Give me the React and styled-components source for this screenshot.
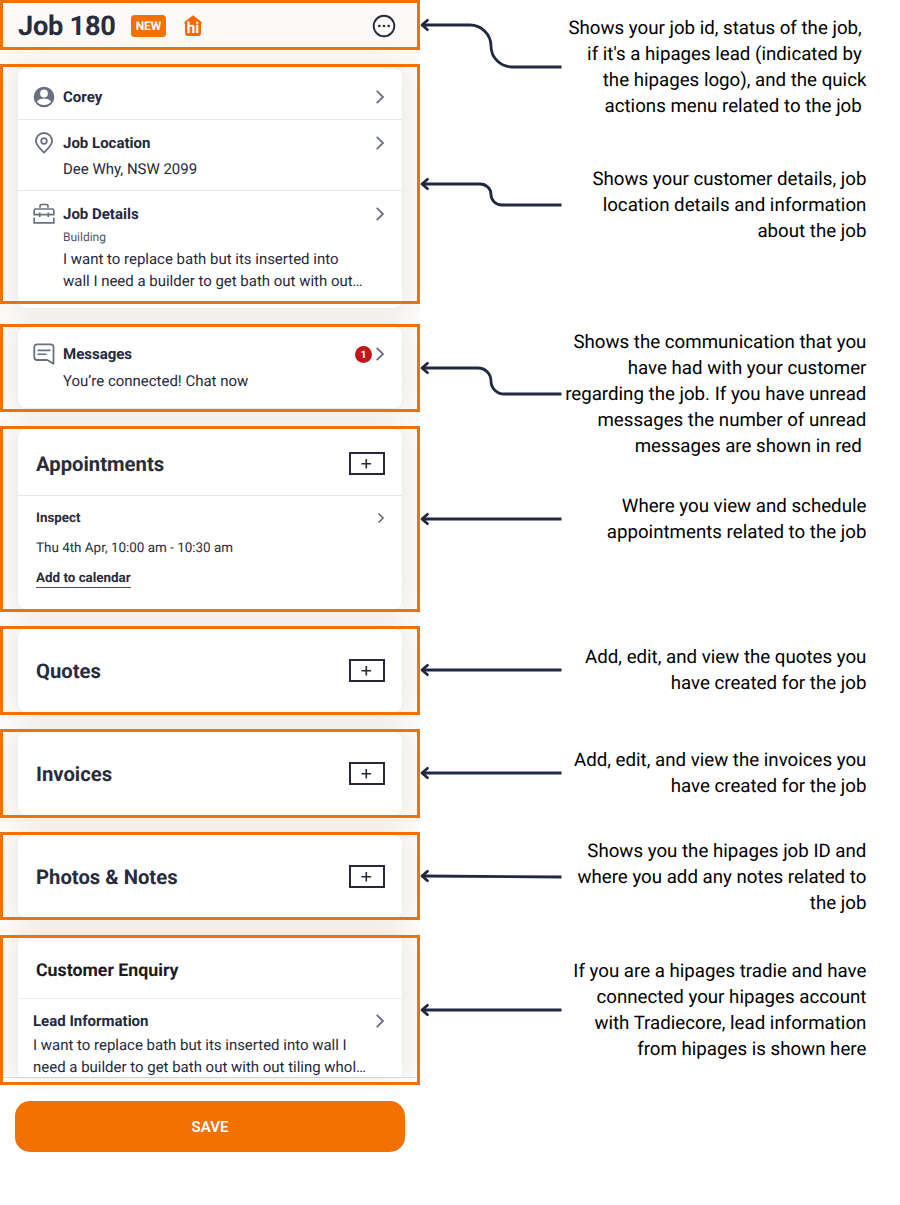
import React from "react";
import styled, { createGlobalStyle } from "styled-components";

const GlobalStyle = createGlobalStyle`
  * { box-sizing: border-box; }
  body {
    margin: 0;
    background: #fff;
    font-family: Roboto, "Liberation Sans", sans-serif;
    text-rendering: geometricPrecision;
    color: #1f2940;
  }
`;

const Page = styled.main`
  display: flex;
  width: 900px;
  height: 1205px;
  overflow: hidden;
`;

const Phone = styled.div`
  width: 420px;
  flex: none;
`;

const Screen = styled.div`
  background: #fbfaf8;
  height: 1078px;
  border-bottom: 1px solid #dfdfe2;
`;

const Section = styled.section`
  position: relative;
  height: ${(p) => p.$h}px;
  margin-bottom: ${(p) => p.$gap}px;
  padding: ${(p) => p.$top}px 18px 0;
`;

/* Callout frame laid over a section of the screen */
const Frame = styled.div`
  position: absolute;
  inset: 0;
  z-index: 2;
  border: 3px solid #f27100;
  pointer-events: none;
`;

const Header = styled.header`
  display: flex;
  align-items: center;
  height: 50px;
  padding: 2px 6px 0 0;
`;

const JobTitle = styled.h1`
  margin: 0 15px 0 0;
  width: 98px;
  white-space: nowrap;
  font-size: 27.2px;
  line-height: 32px;
  font-weight: 700;
  letter-spacing: -0.25px;
  color: #292c3d;
`;

const Tag = styled.span`
  width: 35px;
  height: 22px;
  margin-right: 17px;
  border-radius: 3.5px;
  background: #f27100;
  color: #fff;
  font-size: 12px;
  font-weight: 700;
  line-height: 22px;
  text-align: center;
`;

const MenuButton = styled.span`
  display: flex;
  margin-left: auto;
`;

const Card = styled.article`
  height: ${(p) => p.$h}px;
  border-radius: ${(p) => (p.$cut ? "8px 8px 0 0" : "8px")};
  background: #fff;
  box-shadow: 0 0 28px rgba(30, 28, 24, 0.09), 0 0 3px rgba(30, 28, 24, 0.05);
`;

const Item = styled.div`
  height: ${(p) => p.$h}px;
  padding: ${(p) => p.$pt}px 17px 0 15px;
  border-bottom: ${(p) => (p.$last ? "0" : "1px solid #e8e8ea")};
`;

const ItemHead = styled.div`
  display: flex;
  align-items: center;
  height: 22px;
`;

const IconSlot = styled.span`
  display: flex;
  width: 30px;
`;

const Label = styled.span`
  font-size: ${(p) => p.$size || 15}px;
  font-weight: 700;
  white-space: nowrap;
  color: ${(p) => p.$color || "#1f2940"};
`;

const End = styled.span`
  display: flex;
  align-items: center;
  gap: 2px;
  margin-left: auto;
`;

const Count = styled.span`
  width: 17px;
  height: 17px;
  border-radius: 50%;
  background: #c41616;
  color: #fff;
  font-size: 10.5px;
  font-weight: 700;
  line-height: 17px;
  text-align: center;
`;

const Category = styled.div`
  padding: 4px 0 0 30px;
  font-size: 12px;
  line-height: 16px;
  color: #4d556a;
`;

const Body = styled.div`
  padding: ${(p) => p.$pt}px 0 0 ${(p) => p.$indent}px;
  font-size: 14.97px;
  line-height: 21.5px;
  white-space: nowrap;
`;

const CardHead = styled.div`
  display: flex;
  align-items: center;
  justify-content: space-between;
  height: ${(p) => p.$h}px;
  padding: ${(p) => p.$pt || 0}px 17px 0 18px;
  border-bottom: ${(p) => (p.$line ? `1px solid ${p.$line}` : "0")};
`;

const CardTitle = styled.h2`
  margin: 0;
  font-size: ${(p) => p.$size || 20.25}px;
  line-height: 26px;
  font-weight: 700;
  color: ${(p) => p.$color || "#292c3d"};
`;

const AddBox = styled.span`
  display: flex;
  align-items: center;
  justify-content: center;
  width: 36px;
  height: 23px;
  border: 2px solid #25293a;
`;

const Visit = styled.div`
  display: flex;
  flex-direction: column;
  align-items: flex-start;
  padding: 11px 17px 0 18px;
`;

const VisitHead = styled.div`
  display: flex;
  align-items: center;
  width: 100%;
  height: 22px;
`;

const VisitTime = styled.div`
  margin-top: 11px;
  font-size: 13.45px;
  line-height: 18px;
  color: #292c3d;
`;

const CalendarLink = styled.a`
  margin-top: 13px;
  font-size: 13.4px;
  line-height: 16px;
  font-weight: 700;
  color: #292c3d;
  border-bottom: 1px solid #4b4e5e;
`;

const SaveButton = styled.button`
  display: block;
  width: 390px;
  height: 51px;
  margin: 23px 0 0 15px;
  border: 0;
  border-radius: 15px;
  background: #f27100;
  color: #fff;
  font: 600 15px Roboto, sans-serif;
`;

const Connectors = styled.div`
  display: flex;
  flex-direction: column;
  flex: none;
  width: 142px;
`;

const Line = styled.svg`
  display: block;
  flex: none;
  margin-top: ${(p) => p.$mt}px;
  fill: none;
  stroke: #1f2940;
  stroke-width: 2.8;
  stroke-linejoin: round;
`;

const Notes = styled.div`
  display: flex;
  flex-direction: column;
  width: 304.4px;
  padding-top: 15px;
`;

const Note = styled.p`
  margin: 0 0 ${(p) => p.$gap}px;
  font-size: 18.7px;
  line-height: 26px;
  text-align: right;
  white-space: pre;
  color: #000;
`;

const Chevron = ({ small }) => (
  <svg width="11" height="16" viewBox="0 0 11 16" fill="none" stroke={small ? "#50525f" : "#6b7080"} strokeWidth={small ? 1.2 : 1.8}>
    <path d={small ? "M4.5 3.5 9.2 8 4.5 12.5" : "M2.7 1.8 9 8 2.7 14.2"} />
  </svg>
);

const PersonIcon = () => (
  <svg width="22" height="22" viewBox="0 0 22 22">
    <circle cx="11" cy="11" r="10.3" fill="#6b7080" />
    <circle cx="11" cy="7.5" r="3.9" fill="#fff" />
    <path d="M3.9 15.7C5.5 13.4 8 12.6 11 12.6s5.5.8 7.1 3.1C16.6 17.7 14 19 11 19s-5.6-1.3-7.1-3.3Z" fill="#fff" />
  </svg>
);

const PinIcon = () => (
  <svg width="22" height="22" viewBox="0 0 22 22" fill="none" stroke="#6b7080" strokeWidth="1.8">
    <path d="M11 20.6C8.5 17.8 2.9 13.6 2.9 9.1a8.1 8.1 0 0 1 16.2 0C19.1 13.6 13.5 17.8 11 20.6Z" strokeLinejoin="round" />
    <circle cx="11" cy="9" r="2.8" />
  </svg>
);

const ToolboxIcon = () => (
  <svg width="22" height="22" viewBox="0 0 22 22" fill="none" stroke="#6b7080" strokeWidth="1.7">
    <path d="M7 4.8V3.2c0-1 .7-1.7 1.7-1.7h4.6c1 0 1.7.7 1.7 1.7v1.6M1.2 12.500V7.5c0-1 .6-1.5 1.5-1.5h16.6c.9 0 1.5.5 1.5 1.5v5M1.2 14.8v5h19.6v-5M1.2 11.7h19.600M6.700 9.500v4.500M15.300 9.500v4.500" />
  </svg>
);

const ChatIcon = () => (
  <svg width="22" height="22" viewBox="0 0 22 22" fill="none" stroke="#6b7080" strokeWidth="1.8" strokeLinejoin="round">
    <path d="M20.5 20.8V4c0-1.7-1-2.7-2.7-2.7H4C2.3 1.3 1.3 2.3 1.3 4v10.3c0 1.7 1 2.7 2.7 2.7h10.3l6.2 3.8Z" />
    <path d="M5 7.4h12M5 11.3h8" strokeLinecap="round" strokeWidth="1.6" />
  </svg>
);

const LogoText = styled.text`
  font: 700 15.5px Roboto, sans-serif;
  fill: #fff;
`;

const HiLogo = () => (
  <svg width="20" height="22" viewBox="0 0 20 22">
    <path d="M10 .8 18.2 7.2 17.8 9H17.5V18.5Q17.5 20.5 15.5 20.5H4.5Q2.5 20.5 2.5 18.5V9H2.2L1.8 7.2Z" fill="#ff6600" stroke="#ff6600" strokeLinejoin="round" />
    <LogoText x="10" y="17.7" textAnchor="middle" textLength="12.5" lengthAdjust="spacingAndGlyphs">hi</LogoText>
  </svg>
);

const MoreIcon = () => (
  <svg width="24" height="24" viewBox="0 0 24 24">
    <circle cx="12" cy="12" r="10.3" fill="none" stroke="#292c3d" strokeWidth="1.9" />
    <circle cx="7.3" cy="12" r="1.35" fill="#292c3d" />
    <circle cx="12" cy="12" r="1.35" fill="#292c3d" />
    <circle cx="16.7" cy="12" r="1.35" fill="#292c3d" />
  </svg>
);

const Add = () => (
  <AddBox>
    <svg width="12" height="12" viewBox="0 0 12 12" stroke="#25293a" strokeWidth="1.6">
      <path d="M5.3 .9v9.6M.5 5.7h9.6" />
    </svg>
  </AddBox>
);

/* drop: vertical distance from the arrow head to the tail; r: bend radius */
const Connector = ({ mt, drop = 0, r = 0, slope = 0 }) => (
  <Line $mt={mt} width="142" height={drop + 14} viewBox={`0 0 142 ${drop + 14}`}>
    {drop ? (
      <path d={`M2 7H${71 - r}A${r} ${drop / 2} 0 0 1 71 ${7 + drop / 2}A${r} ${drop / 2} 0 0 0 ${71 + r} ${7 + drop}H141.5`} />
    ) : (
      <path d={`M2 7 141.5 ${7 + slope}`} />
    )}
    <path d="M7.5 2.3 2 7l5.5 4.7" strokeLinecap="round" />
  </Line>
);

const AddSection = ({ title, h, gap, top, cardH }) => (
  <Section $h={h} $gap={gap} $top={top}>
    <Frame />
    <Card $h={cardH}>
      <CardHead $h={cardH}>
        <CardTitle>{title}</CardTitle>
        <Add />
      </CardHead>
    </Card>
  </Section>
);

export default function App() {
  return (
    <Page>
      <GlobalStyle />
      <Phone>
        <Screen>
          <Section $h={50} $gap={14} $top={0}>
            <Frame />
            <Header>
              <JobTitle>Job 180</JobTitle>
              <Tag>NEW</Tag>
              <HiLogo />
              <MenuButton><MoreIcon /></MenuButton>
            </Header>
          </Section>

          <Section $h={240} $gap={20} $top={4}>
            <Frame />
            <Card $h={240}>
              <Item $h={52} $pt={18}>
                <ItemHead>
                  <IconSlot><PersonIcon /></IconSlot>
                  <Label>Corey</Label>
                  <End><Chevron /></End>
                </ItemHead>
              </Item>
              <Item $h={71} $pt={12}>
                <ItemHead>
                  <IconSlot><PinIcon /></IconSlot>
                  <Label>Job Location</Label>
                  <End><Chevron /></End>
                </ItemHead>
                <Body $pt={4.5} $indent={30}>Dee Why, NSW 2099</Body>
              </Item>
              <Item $h={117} $pt={12} $last>
                <ItemHead>
                  <IconSlot><ToolboxIcon /></IconSlot>
                  <Label>Job Details</Label>
                  <End><Chevron /></End>
                </ItemHead>
                <Category>Building</Category>
                <Body $pt={4.4} $indent={30}>
                  I want to replace bath but its inserted into<br />
                  wall I need a builder to get bath out with out…
                </Body>
              </Item>
            </Card>
          </Section>

          <Section $h={88} $gap={14} $top={3}>
            <Frame />
            <Card $h={81}>
              <Item $h={81} $pt={16} $last>
                <ItemHead>
                  <IconSlot><ChatIcon /></IconSlot>
                  <Label>Messages</Label>
                  <End><Count>1</Count><Chevron /></End>
                </ItemHead>
                <Body $pt={5.5} $indent={30}>You’re connected! Chat now</Body>
              </Item>
            </Card>
          </Section>

          <Section $h={186} $gap={14} $top={3}>
            <Frame />
            <Card $h={180}>
              <CardHead $h={67} $pt={3} $line="#e6e6e8">
                <CardTitle>Appointments</CardTitle>
                <Add />
              </CardHead>
              <Visit>
                <VisitHead>
                  <Label $size={13.4} $color="#292c3d">Inspect</Label>
                  <End><Chevron small /></End>
                </VisitHead>
                <VisitTime>Thu 4th Apr, 10:00 am - 10:30 am</VisitTime>
                <CalendarLink>Add to calendar</CalendarLink>
              </Visit>
            </Card>
          </Section>

          <AddSection title="Quotes" h={89} gap={14} top={3} cardH={83} />
          <AddSection title="Invoices" h={89} gap={14} top={3} cardH={83} />
          <AddSection title="Photos & Notes" h={88} gap={15} top={3} cardH={83} />

          <Section $h={150} $gap={0} $top={0}>
            <Frame />
            <Card $h={142} $cut>
              <CardHead $h={64} $pt={9} $line="#f0f0f2">
                <CardTitle $size={17.75} $color="#1c1c20">Customer Enquiry</CardTitle>
              </CardHead>
              <Item $h={78} $pt={11} $last>
                <ItemHead>
                  <Label>Lead Information</Label>
                  <End><Chevron /></End>
                </ItemHead>
                <Body $pt={3} $indent={0}>
                  I want to replace bath but its inserted into wall I<br />
                  need a builder to get bath out with out tiling whol…
                </Body>
              </Item>
            </Card>
          </Section>
        </Screen>
        <SaveButton>SAVE</SaveButton>
      </Phone>

      <Connectors>
        <Connector mt={18} drop={42} r={21} />
        <Connector mt={103} drop={21} r={11} />
        <Connector mt={149} drop={26} r={13} />
        <Connector mt={110.5} />
        <Connector mt={137.5} />
        <Connector mt={89} />
        <Connector mt={88.5} slope={1} />
        <Connector mt={120.5} />
      </Connectors>

      <Notes>
        <Note $gap={47}>{"Shows your job id, status of the job, \nif it's a hipages lead (indicated by \nthe hipages logo), and the quick\nactions menu related to the job "}</Note>
        <Note $gap={85}>{"Shows your customer details, job\nlocation details and information\nabout the job"}</Note>
        <Note $gap={34}>{"Shows the communication that you\nhave had with your customer\nregarding the job. If you have unread\nmessages the number of unread\nmessages are shown in red "}</Note>
        <Note $gap={99}>{"Where you view and schedule\nappointments related to the job"}</Note>
        <Note $gap={51}>{"Add, edit, and view the quotes you\nhave created for the job"}</Note>
        <Note $gap={39}>{"Add, edit, and view the invoices you\nhave created for the job"}</Note>
        <Note $gap={42}>{"Shows you the hipages job ID and\nwhere you add any notes related to\nthe job"}</Note>
        <Note $gap={0}>{"If you are a hipages tradie and have\nconnected your hipages account\nwith Tradiecore, lead information\nfrom hipages is shown here"}</Note>
      </Notes>
    </Page>
  );
}
